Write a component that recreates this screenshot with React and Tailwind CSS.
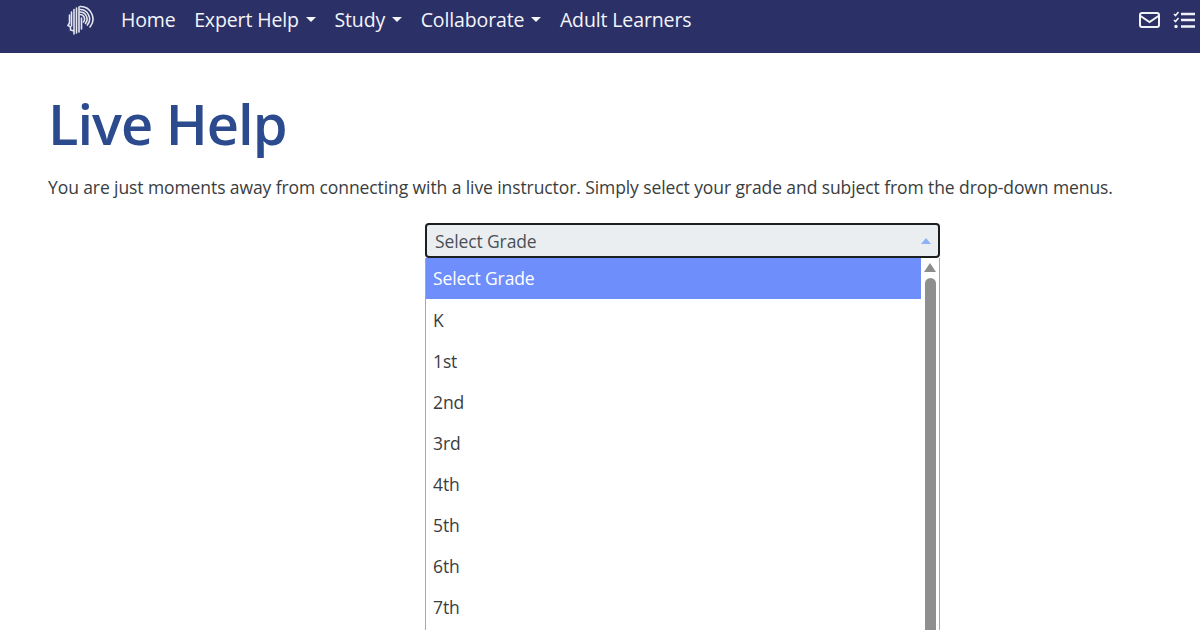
import React from "react";

const font = "font-['Open_Sans','Noto_Sans',sans-serif]";

function Logo() {
  return (
    <svg width="28" height="30" viewBox="0 0 28 30" fill="none" stroke="#e4e7f1" strokeWidth="1.600" strokeLinecap="round" className="shrink-0">
      <path d="M13 1.500A12.500 12.500 0 0 1 23 22" />
      <path d="M13 4.500A9.500 9.500 0 0 1 20.300 20.100" />
      <path d="M13 7A7 7 0 0 1 18.400 18.500" />
      <path d="M13 9.500A4.500 4.500 0 0 1 16.400 17" />
      <path d="M14.500 13V24M12 2V27M9.500 3V28M7 4.500V25.500M4.500 7V21" />
      <path d="M2.500 10V18L1 20.500l2.500 1.500v3l3.500 1V29" />
    </svg>
  );
}

function NavItem({ label, caret }) {
  return (
    <span className="flex items-center gap-[7px] text-[#f4f5fa] text-[19.500px] tracking-[-0.12px] leading-none">
      {label}
      {caret && <span className="w-0 h-0 mt-[-1px] border-x-[5.500px] border-x-transparent border-t-[5.500px] border-t-[#f4f5fa]" />}
    </span>
  );
}

const grades = ["K", "1st", "2nd", "3rd", "4th", "5th", "6th", "7th"];

export default function App() {
  return (
    <div className={`${font} w-[1200px] h-[630px] overflow-hidden bg-white flex flex-col`}>
      <header className="h-[53px] shrink-0 bg-[#2b3067] flex items-start pl-[66px] pr-[5px] pt-[2px]">
        <div className="pt-[3px] pl-[1px]"><Logo /></div>
        <nav className="flex items-center gap-[18.500px] ml-[26px] h-[36px]">
          <NavItem label="Home" />
          <NavItem label="Expert Help" caret />
          <NavItem label="Study" caret />
          <NavItem label="Collaborate" caret />
          <NavItem label="Adult Learners" />
        </nav>
        <div className="ml-auto flex items-center gap-[13px] h-[35px]">
          <svg width="21" height="16" viewBox="0 0 21 16" fill="none" stroke="#f1f2f8" strokeWidth="2">
            <rect x="1" y="1" width="19" height="14" rx="2" />
            <path d="M1.500 4 10.500 10l9-6" />
          </svg>
          <svg width="22" height="18" viewBox="0 0 22 18" fill="none" stroke="#f1f2f8">
            <path d="M1 3l1.500 1.500L5.500 1M1 9l1.500 1.500L5.500 7" strokeWidth="1.600" />
            <circle cx="3" cy="15.500" r="1.700" fill="#f1f2f8" stroke="none" />
            <path d="M8 3h14M8 9h14M8 15.500h14" strokeWidth="2.400" />
          </svg>
        </div>
      </header>

      <main className="flex-1 min-h-0 flex flex-col">
        <h1 className="ml-[48px] mt-[34px] text-[56px] leading-[72px] font-semibold text-[#2c4b8f] tracking-[-1px]">Live Help</h1>
        <p className="ml-[48px] mt-[15px] text-[#3a3d40] text-[17.500px] leading-[26px] tracking-[-0.09px]">
          You are just moments away from connecting with a live instructor. Simply select your grade and subject from the drop-down menus.
        </p>

        <div className="ml-[425px] mt-[23px] w-[515px] flex-1 min-h-0 flex flex-col">
          <div className="h-[35px] shrink-0 rounded-[4px] border-2 border-[#1c1f21] bg-[#ebeef0] flex items-center justify-between pl-[8px] pr-[7px] pt-[1px] text-[#495057] text-[17.500px] tracking-[-0.12px]">
            <span>Select Grade</span>
            <span className="w-0 h-0 border-x-[5px] border-x-transparent border-b-[6px] border-b-[#8fb0f5]" />
          </div>
          <div className="flex-1 min-h-0 flex border-x border-[#a9a9a9] bg-white overflow-hidden">
            <ul className="flex-1 text-[#3a3d40] text-[17.500px] tracking-[-0.12px]">
              <li className="h-[41px] bg-[#6e8efb] text-white flex items-center pl-[7px]">Select Grade</li>
              {grades.map((g) => (
                <li key={g} className="h-[41px] pt-[2px] flex items-center pl-[7px]">{g}</li>
              ))}
            </ul>
            <div className="w-[18px] shrink-0 flex flex-col items-center pt-[5px] bg-white">
              <span className="w-0 h-0 border-x-[6px] border-x-transparent border-b-[9px] border-b-[#8c8c8c]" />
              <span className="mt-[6px] w-[11px] flex-1 rounded-t-full bg-[#8f8f8f]" />
            </div>
          </div>
        </div>
      </main>
    </div>
  );
}
